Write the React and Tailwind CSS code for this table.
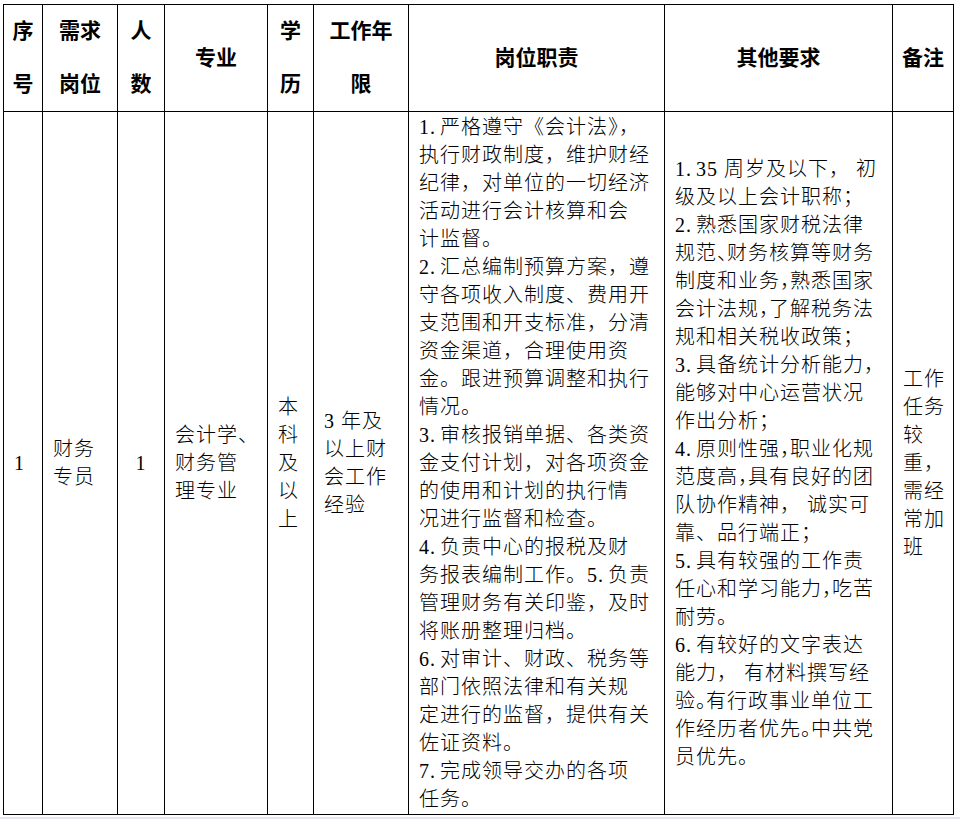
import React from 'react';

// 列宽（边框到边框）
const cols = [39, 75, 47, 103, 46, 95, 256, 228, 61];

const duties = [
  '1.严格遵守《会计法》，',
  '执行财政制度，维护财经',
  '纪律，对单位的一切经济',
  '活动进行会计核算和会',
  '计监督。',
  '2.汇总编制预算方案，遵',
  '守各项收入制度、费用开',
  '支范围和开支标准，分清',
  '资金渠道，合理使用资',
  '金。跟进预算调整和执行',
  '情况。',
  '3.审核报销单据、各类资',
  '金支付计划，对各项资金',
  '的使用和计划的执行情',
  '况进行监督和检查。',
  '4.负责中心的报税及财',
  '务报表编制工作。5.负责',
  '管理财务有关印鉴，及时',
  '将账册整理归档。',
  '6.对审计、财政、税务等',
  '部门依照法律和有关规',
  '定进行的监督，提供有关',
  '佐证资料。',
  '7.完成领导交办的各项',
  '任务。',
];

// ^ 标记后面的标点按半角宽度压缩
const others = [
  '1.35 周岁及以下， 初',
  '级及以上会计职称；',
  '2.熟悉国家财税法律',
  '规范^、财务核算等财务',
  '制度和业务^，熟悉国家',
  '会计法规^，了解税务法',
  '规和相关税收政策；',
  '3.具备统计分析能力，',
  '能够对中心运营状况',
  '作出分析；',
  '4.原则性强^，职业化规',
  '范度高^，具有良好的团',
  '队协作精神， 诚实可',
  '靠、品行端正；',
  '5.具有较强的工作责',
  '任心和学习能力^，吃苦',
  '耐劳。',
  '6.有较好的文字表达',
  '能力， 有材料撰写经',
  '验^。有行政事业单位工',
  '作经历者优先^。中共党',
  '员优先。',
];

const Line = ({ text }) => (
  <div className="whitespace-pre">
    {text.split(/(\^.|\.)/).map((part, i) => {
      if (part.startsWith('^')) {
        return <span key={i} className="tracking-[-10px]">{part.slice(1)}</span>;
      }
      if (part === '.') {
        // 序号后的点宽一些，接近宋体半角
        return <span key={i} className="tracking-[5px]">.</span>;
      }
      return <React.Fragment key={i}>{part}</React.Fragment>;
    })}
  </div>
);

const Lines = ({ items }) => items.map((t, i) => <Line key={i} text={t} />);

const Head = ({ children }) => (
  <th className="border border-black p-0 text-center align-middle font-bold text-[21px] leading-[53px] text-black">
    {children}
  </th>
);

const Cell = ({ children, center }) => (
  <td
    className={`border border-black py-0 align-middle text-[20px] tracking-[1px] leading-[28px] font-light text-black ${
      center ? 'text-center px-0' : 'text-left pl-[10px] pr-0'
    }`}
  >
    {children}
  </td>
);

export default function App() {
  return (
    <div className="flex h-[819px] w-[960px] flex-col bg-white font-['Liberation_Serif','Noto_Sans_CJK_SC',serif]">
      <div className="pl-[3px] pt-[4px]">
        <table className="w-[951px] table-fixed border-collapse">
          <colgroup>
            {cols.map((w, i) => (
              <col key={i} style={{ width: w }} />
            ))}
          </colgroup>
          <thead>
            <tr className="h-[107px]">
              <Head>序<br />号</Head>
              <Head>需求<br />岗位</Head>
              <Head>人<br />数</Head>
              <Head>专业</Head>
              <Head>学<br />历</Head>
              <Head>工作年<br />限</Head>
              <Head>岗位职责</Head>
              <Head>其他要求</Head>
              <Head>备注</Head>
            </tr>
          </thead>
          <tbody>
            <tr className="h-[703px]">
              <Cell>1</Cell>
              <Cell>
                <Lines items={['财务', '专员']} />
              </Cell>
              <Cell center>1</Cell>
              <Cell>
                <Lines items={['会计学、', '财务管', '理专业']} />
              </Cell>
              <Cell>
                <Lines items={['本', '科', '及', '以', '上']} />
              </Cell>
              <Cell>
                <Lines items={['3 年及', '以上财', '会工作', '经验']} />
              </Cell>
              <Cell>
                <Lines items={duties} />
              </Cell>
              <Cell>
                <Lines items={others} />
              </Cell>
              <Cell>
                <Lines items={['工作', '任务', '较', '重，', '需经', '常加', '班']} />
              </Cell>
            </tr>
          </tbody>
        </table>
      </div>
      <div className="mt-[2px] flex-1 bg-[#e4e8ed]" />
    </div>
  );
}
